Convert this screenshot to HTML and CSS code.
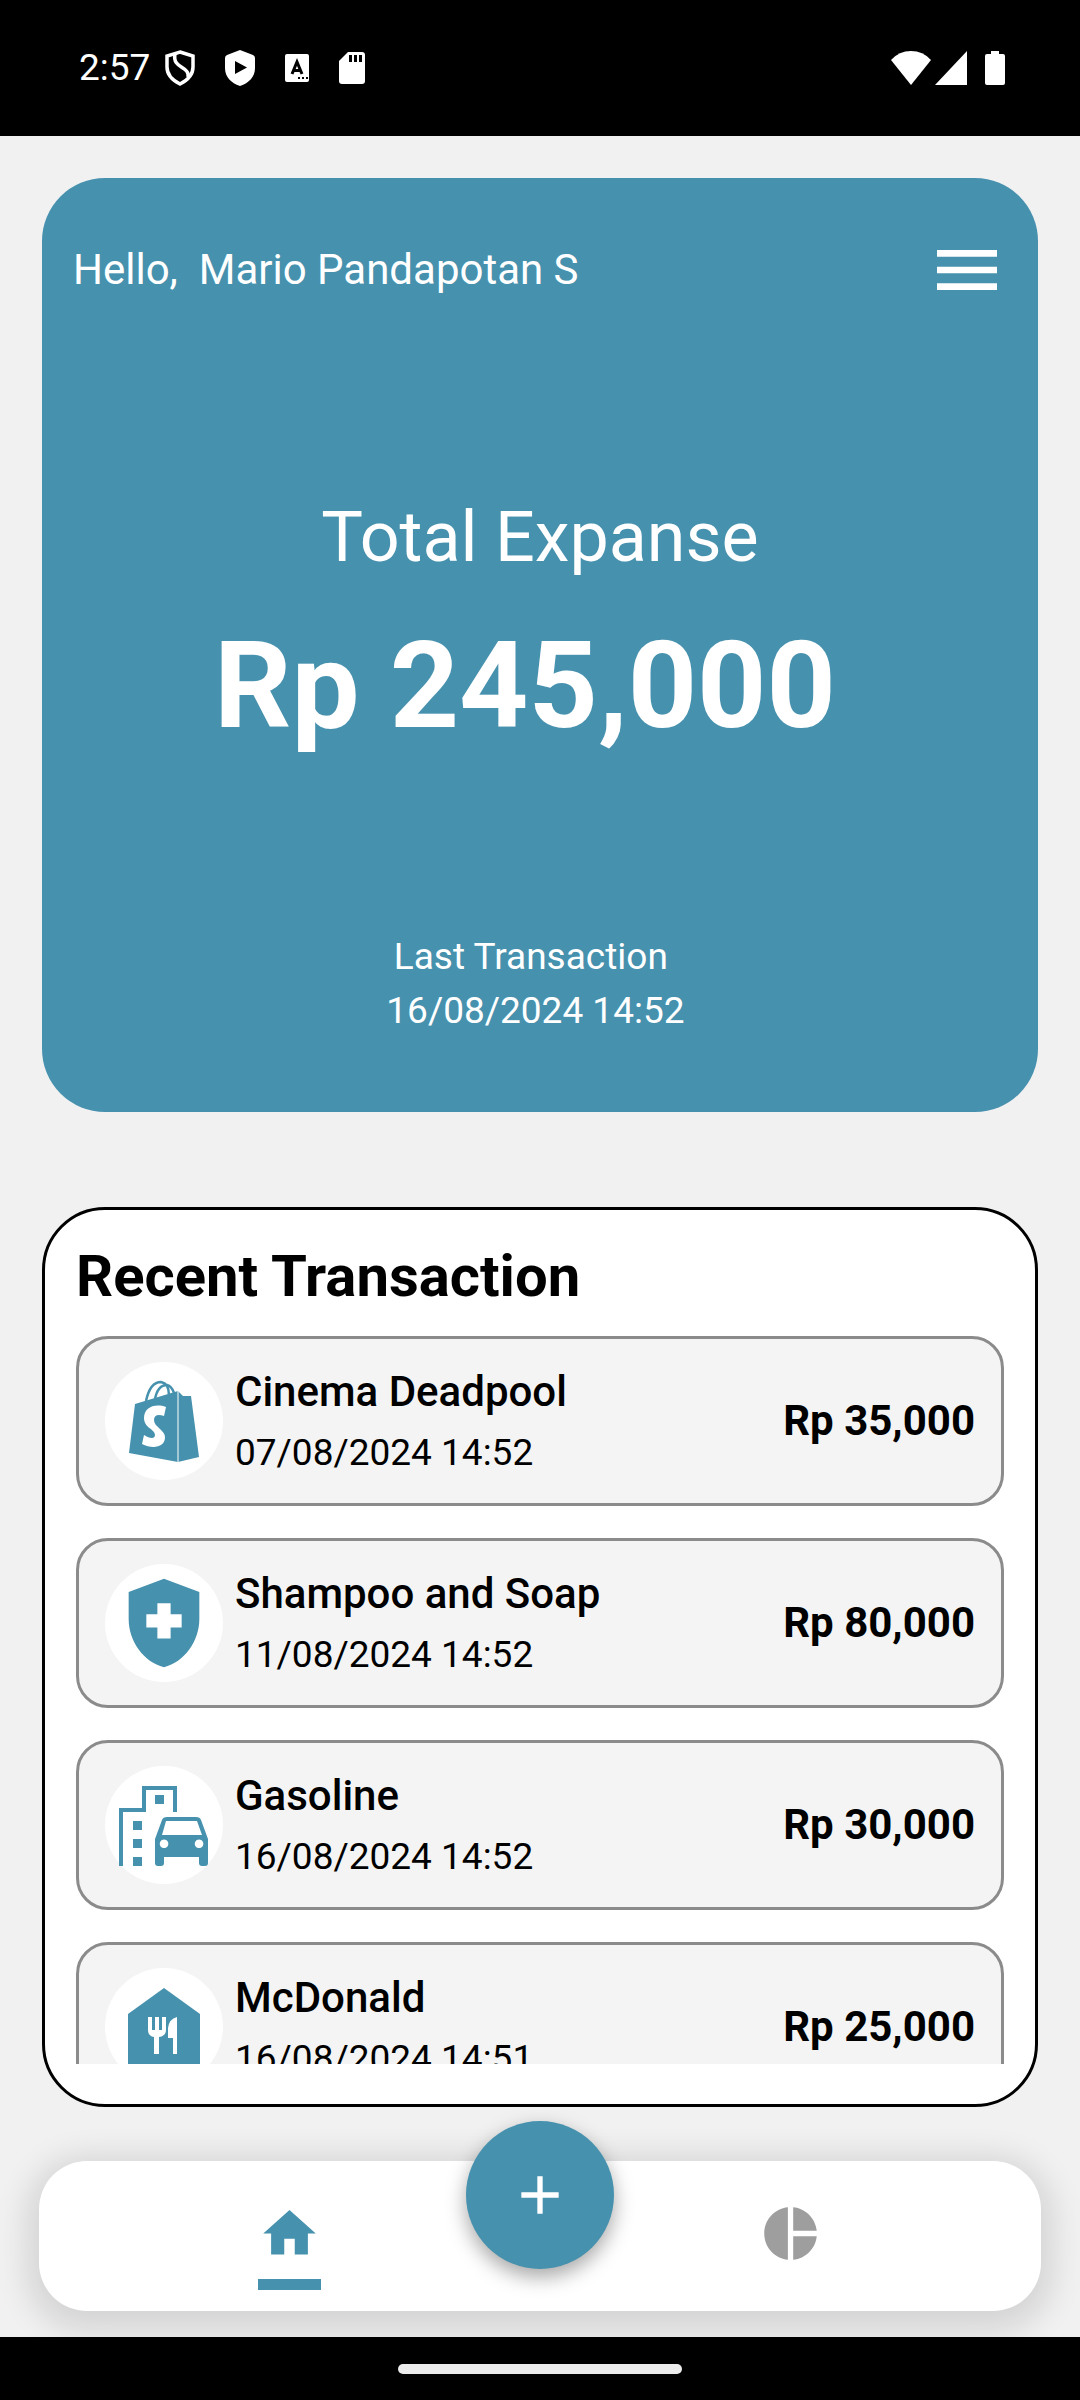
FILE: index.html
```html
<!DOCTYPE html>
<html lang="en">
<head>
<meta charset="utf-8">
<meta name="viewport" content="width=device-width, initial-scale=1">
<title>Expense tracker</title>
<link rel="stylesheet" href="styles.css">
</head>
<body>
<header class="status-bar">
  <span class="clock">2:57</span>
  <div class="status-icons">
    <svg width="30" height="36" viewBox="0 0 30 36" fill="none" stroke="#fff" stroke-width="3.500"><path d="M15 2 28 6v11c0 8-5 13-13 17C7 30 2 25 2 17V6z"/><path d="M10 4c-3 15 15 12 13 23"/></svg>
    <svg width="30" height="36" viewBox="0 0 30 36" fill="#fff"><path fill-rule="evenodd" d="M15 0 28 5q2 1 2 3v10c0 9-6 15-15 18C6 33 0 27 0 18V8q0-2 2-3zM10 11v13l12-6.500z"/></svg>
    <svg width="24" height="28" viewBox="0 0 24 28"><rect width="24" height="28" rx="2" fill="#fff"/><path d="m7 20 5-12 5 12M8.500 16.500h7" fill="none" stroke="#000" stroke-width="3"/><path d="M13 24h2m2 0h2m2 0h2" stroke="#000" stroke-width="2"/></svg>
    <svg width="26" height="32" viewBox="0 0 26 32"><path d="M9 0h14q3 0 3 3v26q0 3-3 3H3q-3 0-3-3V9z" fill="#fff"/><path d="M11.500 3v7m5-7v7m5-7v7" stroke="#000" stroke-width="3"/></svg>
  </div>
  <div class="signal-icons">
    <svg width="40" height="34" viewBox="0 0 40 34" fill="#fff"><path d="M0 9Q8 0 20 0t20 9L20 34z"/></svg>
    <svg width="32" height="34" viewBox="0 0 32 34" fill="#fff"><path d="M32 0v34H0z"/></svg>
    <svg class="battery" width="20" height="34" viewBox="0 0 20 34" fill="#fff"><path d="M6 0h8v3h4q2 0 2 2v27q0 2-2 2H2q-2 0-2-2V5q0-2 2-2h4z"/></svg>
  </div>
</header>

<main class="screen">
  <section class="hero">
    <div class="hero-top">
      <p class="greeting">Hello,&nbsp; Mario Pandapotan S</p>
      <button class="menu" type="button" aria-label="Menu">
        <svg width="80" height="80" viewBox="0 0 24 24" fill="#fff"><path d="M3 18h18v-2H3zm0-5h18v-2H3zm0-7v2h18V6z"/></svg>
      </button>
    </div>
    <div class="total">
      <h1 class="total-label">Total Expanse</h1>
      <p class="total-value">Rp 245,000&nbsp;</p>
    </div>
    <div class="last">
      <p>Last Transaction&nbsp;&nbsp;</p>
      <p>16/08/2024 14:52&nbsp;</p>
    </div>
  </section>

  <section class="recent">
    <h2 class="recent-title">Recent Transaction</h2>
    <ul class="list">
      <li class="row">
        <span class="badge"><svg width="118" height="118" viewBox="0 0 118 118"><path d="M24 91 30 42 73 29 78 34h8l8 61-21 5z" fill="#4691ae"/><path d="M73 29v71" stroke="#fff"/><path d="M41 39c3-14 9-19 15-19 5 1 8 6 8 13M50 37c2-10 7-14 12-14 4 1 6 5 7 8" fill="none" stroke="#4691ae" stroke-width="2.500"/><path d="M61 45 59 54c-6-2-10-1-10 4 0 7 11 10 11 17 0 11-13 12-23 7l2-9c6 4 11 4 11 0 0-6-11-7-11-17 0-10 10-15 22-11z" fill="#fff"/></svg></span>
        <div class="info"><h3>Cinema Deadpool</h3><p>07/08/2024 14:52</p></div>
        <strong class="amount">Rp 35,000</strong>
      </li>
      <li class="row">
        <span class="badge"><svg width="106" height="106" viewBox="0 0 24 24" fill="#4691ae"><path fill-rule="evenodd" d="m12 2-8 3v6.090c0 5.050 3.410 9.760 8 10.910 4.590-1.150 8-5.860 8-10.910V5zm4 11h-2.500v2.500h-3V13H8v-3h2.500V7.500h3V10H16z"/></svg></span>
        <div class="info"><h3>Shampoo and Soap</h3><p>11/08/2024 14:52</p></div>
        <strong class="amount">Rp 80,000</strong>
      </li>
      <li class="row">
        <span class="badge"><svg width="118" height="118" viewBox="0 0 118 118" fill="#4691ae"><path d="M14 100V42h23V20h35v26h-4V24H41v22H18v54zM50 29h9v9h-9zM28 55h9v9h-9zM28 73h9v9h-9zM28 91h9v9h-9z"/><path fill-rule="evenodd" d="M57 54q1-3 5-3h29q4 0 5 3l7 19v24q0 3-3 3h-3q-3 0-3-3v-6H59v6q0 3-3 3h-3q-3 0-3-3V73zM61 55l-4 14h40l-5-14zM59 73.500a4.300 4.300 0 1 0 .1 0zM94 73.500a4.300 4.300 0 1 0 .1 0z"/></svg></span>
        <div class="info"><h3>Gasoline</h3><p>16/08/2024 14:52</p></div>
        <strong class="amount">Rp 30,000</strong>
      </li>
      <li class="row">
        <span class="badge"><svg width="118" height="118" viewBox="0 0 118 118"><path d="M23 46 59 20l36 26v54H23z" fill="#4691ae"/><path d="M43 49h4v13h3V49h4v13h3V49h4v13q0 6-7 7v17h-5V69q-6-1-6-7zM72 49v37h-4V70h-5V60q1-9 9-11z" fill="#fff"/></svg></span>
        <div class="info"><h3>McDonald</h3><p>16/08/2024 14:51</p></div>
        <strong class="amount">Rp 25,000</strong>
      </li>
    </ul>
  </section>

  <nav class="tabs">
    <a class="tab active" href="#home" aria-label="Home"><svg width="63" height="63" viewBox="0 0 24 24" fill="currentColor"><path d="M10 20v-6h4v6h5v-8h3L12 3 2 12h3v8z"/></svg></a>
    <a class="tab" href="#stats" aria-label="Statistics"><svg width="63" height="63" viewBox="0 0 24 24" fill="currentColor"><path d="M11 2v20c-5.070-.5-9-4.790-9-10s3.930-9.500 9-10zm2.030 0v8.990H22c-.47-4.740-4.240-8.520-8.970-8.990zm0 11.010V22c4.740-.47 8.500-4.250 8.970-8.990z"/></svg></a>
    <button class="add" type="button" aria-label="Add transaction"><svg width="64" height="64" viewBox="0 0 24 24" fill="#fff"><path d="M19 13h-6v6h-2v-6H5v-2h6V5h2v6h6z"/></svg></button>
  </nav>
</main>

<footer class="gesture-bar"><span class="handle"></span></footer>
</body>
</html>
```
FILE: styles.css
```css
* { box-sizing: border-box; margin: 0; padding: 0; }

body {
  height: 100vh;
  display: flex;
  flex-direction: column;
  background: #f1f1f1;
  color: #000;
  font-family: Roboto, "Liberation Sans", sans-serif;
  font-size: 37px;
  line-height: 44px;
}

svg { display: block; }
button { border: 0; background: none; cursor: pointer; }

.status-bar {
  flex: none;
  height: 136px;
  padding: 0 75px 0 79px;
  display: flex;
  align-items: center;
  gap: 15px;
  background: #000;
  color: #fff;
}
.status-icons { display: flex; align-items: center; gap: 30px; }
.signal-icons { display: flex; align-items: center; gap: 4px; margin-left: auto; }
.battery { margin-left: 14px; }

.screen {
  flex: 1;
  min-height: 0;
  display: flex;
  flex-direction: column;
  padding: 42px 39px 26px;
  overflow: hidden;
}

.hero {
  flex: none;
  margin: 0 3px 95px;
  padding: 52px 31px 79px;
  border-radius: 63px;
  background: #4691ae;
  color: #fff;
  text-align: center;
}
.hero-top { display: flex; justify-content: space-between; align-items: center; }
.greeting { font-size: 42px; line-height: 50px; }
.total { margin: 186px 0 178px; display: flex; flex-direction: column; gap: 37px; }
.total-label { font-size: 70px; line-height: 82px; font-weight: 400; }
.total-value { font-size: 121px; line-height: 142px; font-weight: 700; }
.last { display: flex; flex-direction: column; gap: 10px; }

.recent {
  flex: 1;
  min-height: 0;
  margin: 0 3px 54px;
  padding: 32px 31px 40px;
  display: flex;
  flex-direction: column;
  gap: 26px;
  border: 3px solid #000;
  border-radius: 63px;
  background: #fff;
}
.recent-title { font-size: 58px; line-height: 68px; font-weight: 700; }
.list {
  flex: 1;
  min-height: 0;
  display: flex;
  flex-direction: column;
  gap: 32px;
  overflow-y: auto;
  scrollbar-width: none;
  list-style: none;
}
.row {
  flex: none;
  height: 170px;
  padding: 0 26px;
  display: flex;
  align-items: center;
  gap: 12px;
  border: 3px solid #8b8b8b;
  border-radius: 32px;
  background: #f4f4f4;
}
.badge {
  flex: none;
  width: 118px;
  height: 118px;
  display: grid;
  place-items: center;
  border-radius: 50%;
  background: #fff;
}
.info { flex: 1; display: flex; flex-direction: column; gap: 14px; }
.info h3 { font-size: 42px; line-height: 50px; font-weight: 500; }
.amount { font-size: 42px; line-height: 50px; font-weight: 700; }

.tabs {
  position: relative;
  flex: none;
  height: 150px;
  display: flex;
  border-radius: 48px;
  background: #fff;
  box-shadow: 0 8px 32px 12px rgba(0, 0, 0, .12);
}
.tab {
  flex: 1;
  display: flex;
  flex-direction: column;
  align-items: center;
  gap: 14px;
  padding-top: 41px;
  color: #9e9e9e;
}
.tab.active { color: #4691ae; }
.tab.active::after { content: ""; width: 63px; height: 11px; background: currentColor; }
.add {
  position: absolute;
  top: -40px;
  left: 50%;
  width: 148px;
  height: 148px;
  margin-left: -74px;
  display: grid;
  place-items: center;
  border-radius: 50%;
  background: #4691ae;
  box-shadow: 0 8px 20px rgba(0, 0, 0, .35);
}

.gesture-bar {
  flex: none;
  height: 63px;
  display: grid;
  place-items: center;
  background: #000;
}
.handle { width: 284px; height: 10px; border-radius: 5px; background: #ececec; }
```
